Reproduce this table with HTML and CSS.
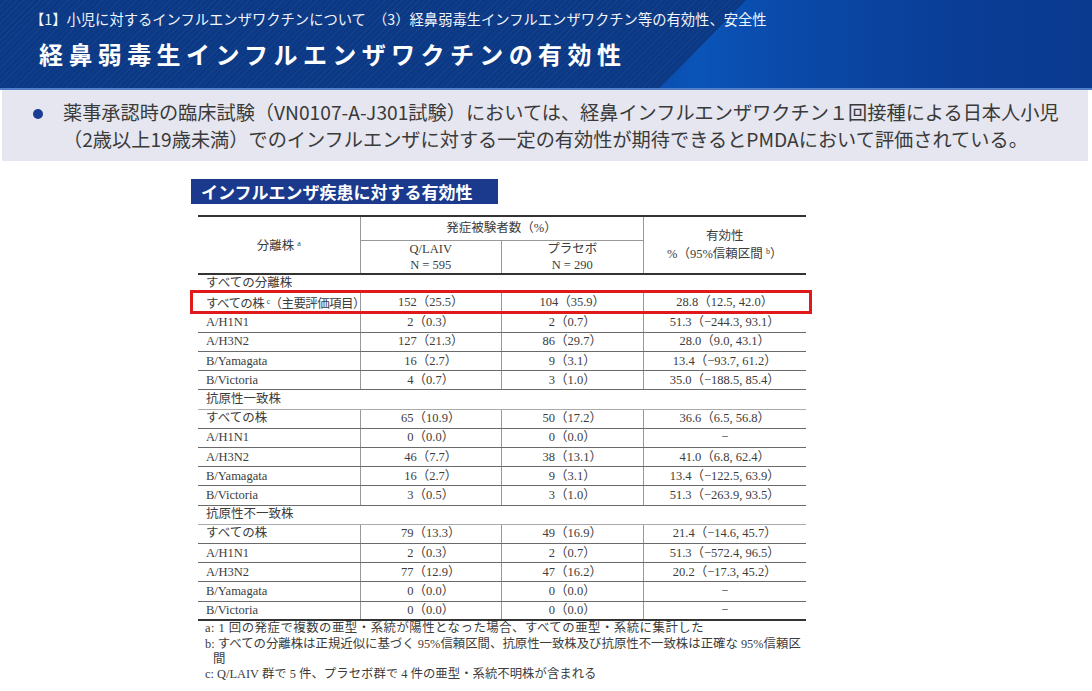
FILE: index.html
```html
<!DOCTYPE html>
<html lang="ja">
<head>
<meta charset="utf-8">
<title>経鼻弱毒生インフルエンザワクチンの有効性</title>
<link rel="stylesheet" href="styles.css">
</head>
<body>
<header class="hero">
  <div class="crumb">【1】小児に対するインフルエンザワクチンについて　（3）経鼻弱毒生インフルエンザワクチン等の有効性、安全性</div>
  <h1 class="title">経鼻弱毒生インフルエンザワクチンの有効性</h1>
</header>
<section class="lead">
  <span class="dot"></span>
  <p class="lead-text">薬事承認時の臨床試験（VN0107-A-J301試験）においては、経鼻インフルエンザワクチン１回接種による日本人小児<br>（2歳以上19歳未満）でのインフルエンザに対する一定の有効性が期待できるとPMDAにおいて評価されている。</p>
</section>
<main class="figure">
  <div class="fig-title">インフルエンザ疾患に対する有効性</div>
  <div class="table-wrap">
    <table class="eff">
      <thead>
        <tr class="h1row">
          <th rowspan="2" class="c1">分離株 <sup>a</sup></th>
          <th colspan="2" class="grp">発症被験者数（%）</th>
          <th rowspan="2" class="c4">有効性<br>%（95%信頼区間 <sup>b</sup>）</th>
        </tr>
        <tr class="h2row">
          <th class="c2">Q/LAIV<br>N = 595</th>
          <th class="c3">プラセボ<br>N = 290</th>
        </tr>
      </thead>
      <tbody>
        <tr class="sec first"><td colspan="4">すべての分離株</td></tr>
        <tr><td class="tight">すべての株 <sup>c</sup>（主要評価項目）</td><td>152（25.5）</td><td>104（35.9）</td><td>28.8（12.5, 42.0）</td></tr>
        <tr><td>A/H1N1</td><td>2（0.3）</td><td>2（0.7）</td><td>51.3（−244.3, 93.1）</td></tr>
        <tr><td>A/H3N2</td><td>127（21.3）</td><td>86（29.7）</td><td>28.0（9.0, 43.1）</td></tr>
        <tr><td>B/Yamagata</td><td>16（2.7）</td><td>9（3.1）</td><td>13.4（−93.7, 61.2）</td></tr>
        <tr><td>B/Victoria</td><td>4（0.7）</td><td>3（1.0）</td><td>35.0（−188.5, 85.4）</td></tr>
        <tr class="sec"><td colspan="4">抗原性一致株</td></tr>
        <tr><td>すべての株</td><td>65（10.9）</td><td>50（17.2）</td><td>36.6（6.5, 56.8）</td></tr>
        <tr><td>A/H1N1</td><td>0（0.0）</td><td>0（0.0）</td><td>−</td></tr>
        <tr><td>A/H3N2</td><td>46（7.7）</td><td>38（13.1）</td><td>41.0（6.8, 62.4）</td></tr>
        <tr><td>B/Yamagata</td><td>16（2.7）</td><td>9（3.1）</td><td>13.4（−122.5, 63.9）</td></tr>
        <tr><td>B/Victoria</td><td>3（0.5）</td><td>3（1.0）</td><td>51.3（−263.9, 93.5）</td></tr>
        <tr class="sec"><td colspan="4">抗原性不一致株</td></tr>
        <tr><td>すべての株</td><td>79（13.3）</td><td>49（16.9）</td><td>21.4（−14.6, 45.7）</td></tr>
        <tr><td>A/H1N1</td><td>2（0.3）</td><td>2（0.7）</td><td>51.3（−572.4, 96.5）</td></tr>
        <tr><td>A/H3N2</td><td>77（12.9）</td><td>47（16.2）</td><td>20.2（−17.3, 45.2）</td></tr>
        <tr><td>B/Yamagata</td><td>0（0.0）</td><td>0（0.0）</td><td>−</td></tr>
        <tr class="last"><td>B/Victoria</td><td>0（0.0）</td><td>0（0.0）</td><td>−</td></tr>
      </tbody>
    </table>
    <div class="highlight"></div>
  </div>
  <div class="notes">
    <p class="wide">a: 1 回の発症で複数の亜型・系統が陽性となった場合、すべての亜型・系統に集計した</p>
    <p>b: すべての分離株は正規近似に基づく 95%信頼区間、抗原性一致株及び抗原性不一致株は正確な 95%信頼区<br><span class="indent">間</span></p>
    <p>c: Q/LAIV 群で 5 件、プラセボ群で 4 件の亜型・系統不明株が含まれる</p>
  </div>
</main>
</body>
</html>
```
FILE: styles.css
```css
* { box-sizing: border-box; }
html, body { margin: 0; padding: 0; }
body {
  width: 1092px;
  height: 691px;
  overflow: hidden;
  background: #ffffff;
  font-family: "Noto Sans CJK JP", "Noto Sans", sans-serif;
  color: #333;
}

/* Header band */
.hero {
  position: relative;
  height: 90px;
  padding: 9px 0 0 30px;
  background: linear-gradient(90deg, #0b3f9a 0%, #0b46a6 55%, #0a54b8 64%, #0a4aa9 72%, #0a3d96 88%, #0a3a90 100%);
  border-bottom: 2px solid #4f7fc8;
  overflow: hidden;
}
.hero::before {
  content: "";
  position: absolute;
  inset: 0;
  background:
    repeating-linear-gradient(135deg, rgba(255,255,255,0.035) 0 1px, rgba(0,0,0,0) 1px 4px),
    #0b3985;
  clip-path: polygon(0 0, 746px 0, 660px 100%, 0 100%);
}
.crumb {
  position: relative;
  color: #f2f5fb;
  font-size: 14.3px;
  line-height: 19px;
  white-space: nowrap;
}
.title {
  position: relative;
  margin: 11px 0 0 9px;
  color: #ffffff;
  font-size: 24px;
  line-height: 30px;
  font-weight: 700;
  letter-spacing: 5.4px;
  white-space: nowrap;
}

/* Lead panel */
.lead {
  display: flex;
  align-items: flex-start;
  margin: 0 4px 0 2px;
  height: 71px;
  padding: 0 0 0 31px;
  background: #e5e6ef;
}
.dot {
  flex: none;
  width: 10px;
  height: 10px;
  margin-top: 19px;
  border-radius: 50%;
  background: #1b3c94;
}
.lead-text {
  margin: 9px 0 0 20px;
  font-size: 19.2px;
  line-height: 27px;
  color: #3a3a3a;
  white-space: nowrap;
}

/* Figure */
.figure {
  margin: 18px 0 0 191px;
  width: 622px;
}
.fig-title {
  width: 307px;
  height: 25px;
  padding-left: 10px;
  background: #1b3a8e;
  color: #ffffff;
  font-size: 17px;
  line-height: 25px;
  font-weight: 700;
  white-space: nowrap;
}
.table-wrap {
  position: relative;
  margin: 11px 0 0 7px;
  width: 608px;
}
.eff {
  width: 608px;
  border-collapse: collapse;
  table-layout: fixed;
  font-family: "Liberation Serif", "Noto Sans CJK JP", serif;
  font-size: 12.5px;
  color: #3c3c3c;
}
.eff th {
  font-weight: 400;
  text-align: center;
  vertical-align: middle;
  line-height: 16px;
  padding: 0;
}
.eff thead tr.h1row th { border-top: 2px solid #333; }
.eff th.c1 { width: 162px; border-right: 1px solid #999; border-bottom: 2px solid #333; }
.eff th.grp { height: 24px; border-bottom: 1px solid #999; }
.eff th.c4 { width: 163px; border-left: 1px solid #999; border-bottom: 2px solid #333; }
.eff th.c2 { width: 140px; height: 33px; border-right: 1px solid #999; border-bottom: 2px solid #333; }
.eff th.c3 { width: 143px; border-bottom: 2px solid #333; }
.eff sup { font-size: 8px; vertical-align: 4px; }

.eff td {
  height: 19.2px;
  padding: 0;
  line-height: 17px;
  text-align: center;
  border-bottom: 1px solid #6a6a6a;
  border-left: 1px solid #999;
  white-space: nowrap;
}
.eff td:first-child {
  text-align: left;
  padding-left: 8px;
  border-left: none;
}
.eff td.tight { letter-spacing: -0.6px; }
.eff tr.sec td {
  border-left: none;
  border-bottom: 1px solid #aaa;
}
.eff tr.sec.first td { border-bottom: none; }
.eff tr.last td { border-bottom: 2px solid #333; }

.highlight {
  position: absolute;
  left: -8px;
  top: 75px;
  width: 622px;
  height: 24px;
  border: 3px solid #e0191b;
}

.notes {
  margin: 0 0 0 14px;
  font-family: "Liberation Serif", "Noto Sans CJK JP", serif;
  font-size: 12.4px;
  line-height: 15.4px;
  color: #3c3c3c;
}
.notes p { margin: 0; white-space: nowrap; }
.notes p.wide { letter-spacing: 0.5px; }
.notes .indent { padding-left: 8px; }
```
